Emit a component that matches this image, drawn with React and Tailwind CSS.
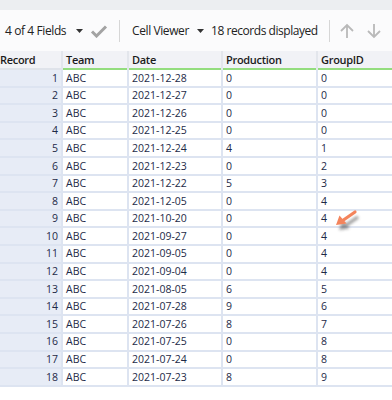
import React from 'react'

const rows = [
  [1, 'ABC', '2021-12-28', 0, 0],
  [2, 'ABC', '2021-12-27', 0, 0],
  [3, 'ABC', '2021-12-26', 0, 0],
  [4, 'ABC', '2021-12-25', 0, 0],
  [5, 'ABC', '2021-12-24', 4, 1],
  [6, 'ABC', '2021-12-23', 0, 2],
  [7, 'ABC', '2021-12-22', 5, 3],
  [8, 'ABC', '2021-12-05', 0, 4],
  [9, 'ABC', '2021-10-20', 0, 4],
  [10, 'ABC', '2021-09-27', 0, 4],
  [11, 'ABC', '2021-09-05', 0, 4],
  [12, 'ABC', '2021-09-04', 0, 4],
  [13, 'ABC', '2021-08-05', 6, 5],
  [14, 'ABC', '2021-07-28', 9, 6],
  [15, 'ABC', '2021-07-26', 8, 7],
  [16, 'ABC', '2021-07-25', 0, 8],
  [17, 'ABC', '2021-07-24', 0, 8],
  [18, 'ABC', '2021-07-23', 8, 9],
]

function Caret() {
  return (
    <svg width="7" height="4" viewBox="0 0 7 4" className="shrink-0">
      <path d="M0 0 L7 0 L3.5 4 Z" fill="#333" />
    </svg>
  )
}

function Toolbar() {
  return (
    <div className="h-[41px] bg-[#fbfbfc] flex items-center text-[12px] text-[#222] whitespace-nowrap font-['Open_Sans',sans-serif]">
      <span className="ml-[5px] w-[62px] shrink-0 tracking-[-0.4px]">4 of 4 Fields</span>
      <span className="ml-[9px]"><Caret /></span>
      <svg width="18" height="14" viewBox="0 0 18 14" className="ml-[7px] shrink-0">
        <path d="M2 7.5 L6.5 12 L16 2.5" stroke="#a3a3a3" strokeWidth="3" fill="none" />
      </svg>
      <div className="ml-[11px] w-px h-[22px] bg-[#d6d6d6] shrink-0" />
      <span className="ml-[12px] w-[56px] shrink-0 tracking-[-0.4px]">Cell Viewer</span>
      <span className="ml-[9px]"><Caret /></span>
      <span className="ml-[7px] w-[106px] shrink-0 tracking-[-0.45px]">18 records displayed</span>
      <div className="ml-[12px] w-px h-[22px] bg-[#d6d6d6] shrink-0" />
      <svg width="16" height="16" viewBox="0 0 16 16" className="ml-[9px] shrink-0">
        <path d="M8 15 V2 M2 8 L8 2 L14 8" stroke="#b9b9b9" strokeWidth="1.8" fill="none" />
      </svg>
      <svg width="16" height="16" viewBox="0 0 16 16" className="ml-[11px] shrink-0">
        <path d="M8 1 V14 M2 8 L8 14 L14 8" stroke="#b9b9b9" strokeWidth="1.8" fill="none" />
      </svg>
    </div>
  )
}

export default function App() {
  return (
    <div className="relative w-[392px] h-[400px] overflow-hidden bg-white font-['Open_Sans',sans-serif]">
      <div className="h-[10px] bg-[#eceef1]" />
      <Toolbar />
      <div className="flex h-[19px] bg-[#f1f2f6] text-[11px] font-semibold text-[#1b1b1b] leading-none">
        <div className="w-[61px] border-b-2 border-[#dfe3ea] flex items-center tracking-[-0.3px]">Record</div>
        <div className="w-[2px] bg-[#e3e6ec]" />
        <div className="w-[64px] border-b-2 border-[#93dd7e] flex items-center pl-[3px] tracking-[-0.3px]">Team</div>
        <div className="w-[2px] bg-[#e3e6ec]" />
        <div className="w-[92px] border-b-2 border-[#93dd7e] flex items-center pl-[3px] tracking-[-0.3px]">Date</div>
        <div className="w-[2px] bg-[#e3e6ec]" />
        <div className="w-[93px] border-b-2 border-[#93dd7e] flex items-center pl-[3px] tracking-[-0.3px]">Production</div>
        <div className="w-[2px] bg-[#e3e6ec]" />
        <div className="flex-1 border-b-2 border-[#93dd7e] flex items-center pl-[3px] tracking-[-0.3px]">GroupID</div>
      </div>
      <div className="text-[10.5px] text-[#1d2a47] leading-none">
        {rows.map((r) => (
          <div key={r[0]} className="flex h-[17.6px] border-b-2 border-[#dde4f1]">
            <div className="w-[61px] bg-[#e7ecf6] flex items-center justify-end pr-[3px]">{r[0]}</div>
            <div className="w-[2px] bg-[#dde4f1]" />
            <div className="w-[64px] flex items-center pl-[3px]">{r[1]}</div>
            <div className="w-[2px] bg-[#dde4f1]" />
            <div className="w-[92px] flex items-center pl-[3px]">{r[2]}</div>
            <div className="w-[2px] bg-[#dde4f1]" />
            <div className="w-[93px] flex items-center pl-[3px]">{r[3]}</div>
            <div className="w-[2px] bg-[#dde4f1]" />
            <div className="flex-1 flex items-center pl-[3px]">{r[4]}</div>
          </div>
        ))}
      </div>
      <svg className="absolute left-[330px] top-[203px]" width="34" height="34" viewBox="0 0 34 34">
        <defs>
          <filter id="sh" x="-50%" y="-50%" width="200%" height="200%">
            <feGaussianBlur stdDeviation="1.6" />
          </filter>
        </defs>
        <g filter="url(#sh)" opacity="0.55" transform="translate(3 5)">
          <path d="M25 9 L12 18" stroke="#444" strokeWidth="3.2" />
          <path d="M6 22 L9.5 12.5 L16.5 20.5 Z" fill="#444" />
        </g>
        <path d="M25 9 L12 18" stroke="#f4845c" strokeWidth="3.2" strokeLinecap="round" />
        <path d="M6 22 L9.5 12.5 L16.5 20.5 Z" fill="#f4845c" />
      </svg>
    </div>
  )
}
